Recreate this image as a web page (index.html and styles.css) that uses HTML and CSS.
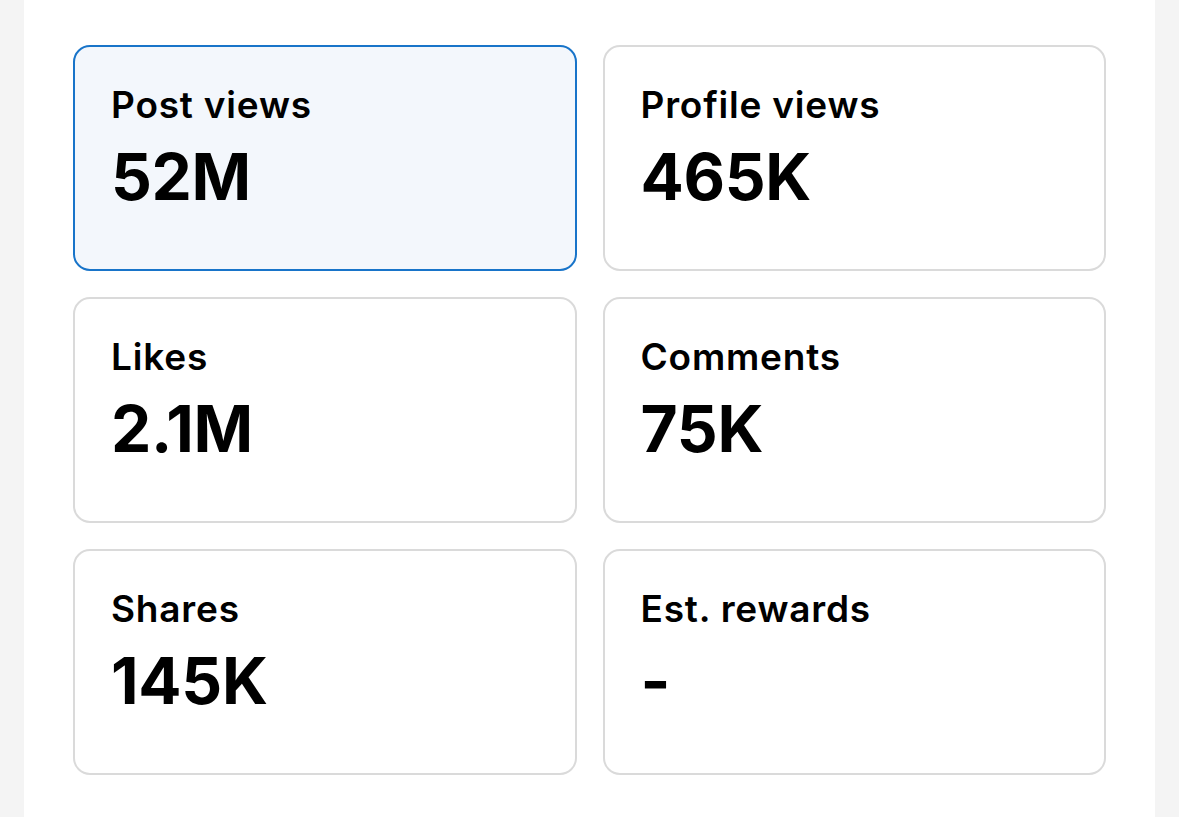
FILE: index.html
```html
<!DOCTYPE html>
<html>
<head>
<meta charset="utf-8">
<link rel="stylesheet" href="styles.css">
</head>
<body>
<div class="panel">
  <div class="grid">
    <div class="card active"><div class="label">Post views</div><div class="value">52M</div></div>
    <div class="card"><div class="label">Profile views</div><div class="value">465K</div></div>
    <div class="card"><div class="label">Likes</div><div class="value">2.1M</div></div>
    <div class="card"><div class="label">Comments</div><div class="value">75K</div></div>
    <div class="card"><div class="label">Shares</div><div class="value">145K</div></div>
    <div class="card"><div class="label">Est. rewards</div><div class="value">-</div></div>
  </div>
</div>
</body>
</html>
```
FILE: styles.css
```css
html, body {
  margin: 0;
  padding: 0;
  background: #f4f4f4;
  font-family: Inter, "Noto Sans", sans-serif;
  color: #000;
}
.panel {
  margin: 0 24px;
  background: #fff;
  padding: 45px 49px 60px;
  min-height: 817px;
  box-sizing: border-box;
}
.grid {
  display: grid;
  grid-template-columns: 1fr 1fr;
  gap: 26px;
}
.card {
  height: 226px;
  box-sizing: border-box;
  border: 2px solid #dadada;
  border-radius: 17px;
  padding: 36px 36px 0 36px;
  background: #fff;
}
.card.active {
  border: 2px solid #1874c9;
  background: #f3f7fc;
}
.label {
  font-size: 37px;
  font-weight: 600;
  line-height: 1.21;
  letter-spacing: 0.8px;
}
.value {
  margin-top: 10px;
  font-size: 64px;
  font-weight: 700;
  line-height: 1.21;
  letter-spacing: -0.3px;
}
```
